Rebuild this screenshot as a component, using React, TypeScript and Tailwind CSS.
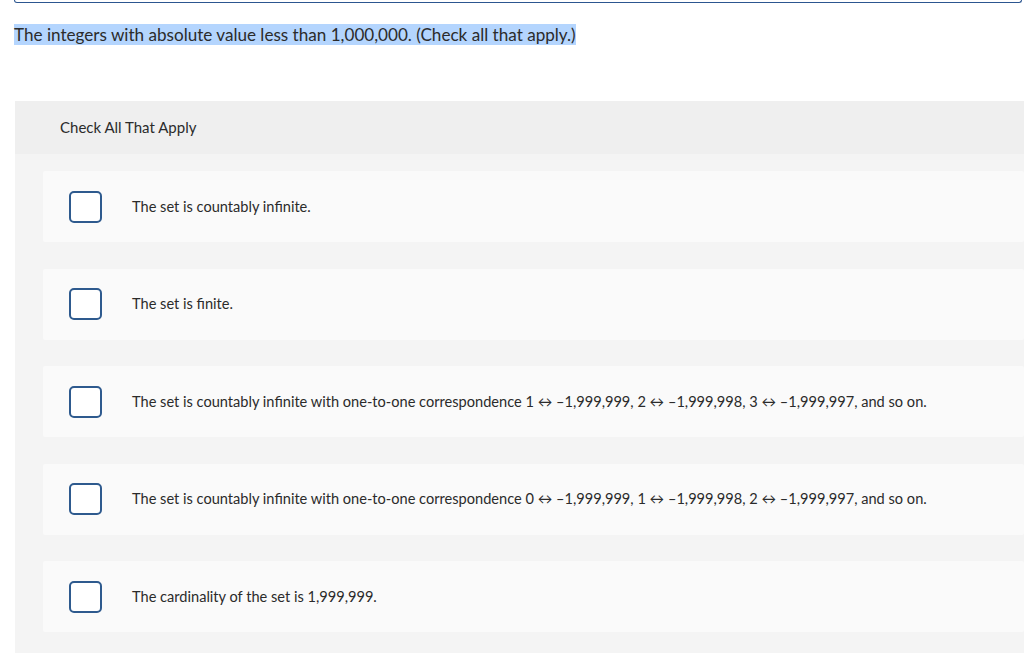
const options = [
  "The set is countably infinite.",
  "The set is finite.",
  "The set is countably infinite with one-to-one correspondence 1 \u2194 \u20131,999,999, 2 \u2194 \u20131,999,998, 3 \u2194 \u20131,999,997, and so on.",
  "The set is countably infinite with one-to-one correspondence 0 \u2194 \u20131,999,999, 1 \u2194 \u20131,999,998, 2 \u2194 \u20131,999,997, and so on.",
  "The cardinality of the set is 1,999,999.",
];

function Option({ label }: { label: string }) {
  return (
    <div className="flex items-center h-[71px] bg-[#fafafa] rounded-[2px]">
      <span className="ml-[26px] w-[33px] h-[32px] shrink-0 rounded-[5px] border-[2.5px] border-[#2e5a8e] bg-white" />
      <span className="ml-[30px] text-[14.6px] text-[#2b2b2b]">{label}</span>
    </div>
  );
}

export default function App() {
  return (
    <div className="w-[1024px] h-[659px] overflow-hidden bg-white font-['Lato','Liberation_Sans',sans-serif]">
      <div className="ml-[14px] w-[1008px] h-[3px] border-x-[1.5px] border-b-[1.5px] border-[#2c5690] rounded-b-[6px]" />
      <div className="mt-[22px] ml-[14px] leading-[20px] text-[17.1px] text-[#2b2b2b]">
        <span className="bg-[#b4d5fe]">The integers with absolute value less than 1,000,000. (Check all that apply.)</span>
      </div>
      <section className="mt-[56px] ml-[15px] w-[1009px] bg-[#f4f4f4]">
        <div className="h-[53px] flex items-center pl-[45px] bg-[#efefef] text-[15px] text-[#2b2b2b]">
          Check All That Apply
        </div>
        <div className="flex flex-col gap-[26.5px] pt-[17px] pb-[21px] pl-[28px]">
          {options.map((o) => (
            <Option key={o} label={o} />
          ))}
        </div>
      </section>
    </div>
  );
}
